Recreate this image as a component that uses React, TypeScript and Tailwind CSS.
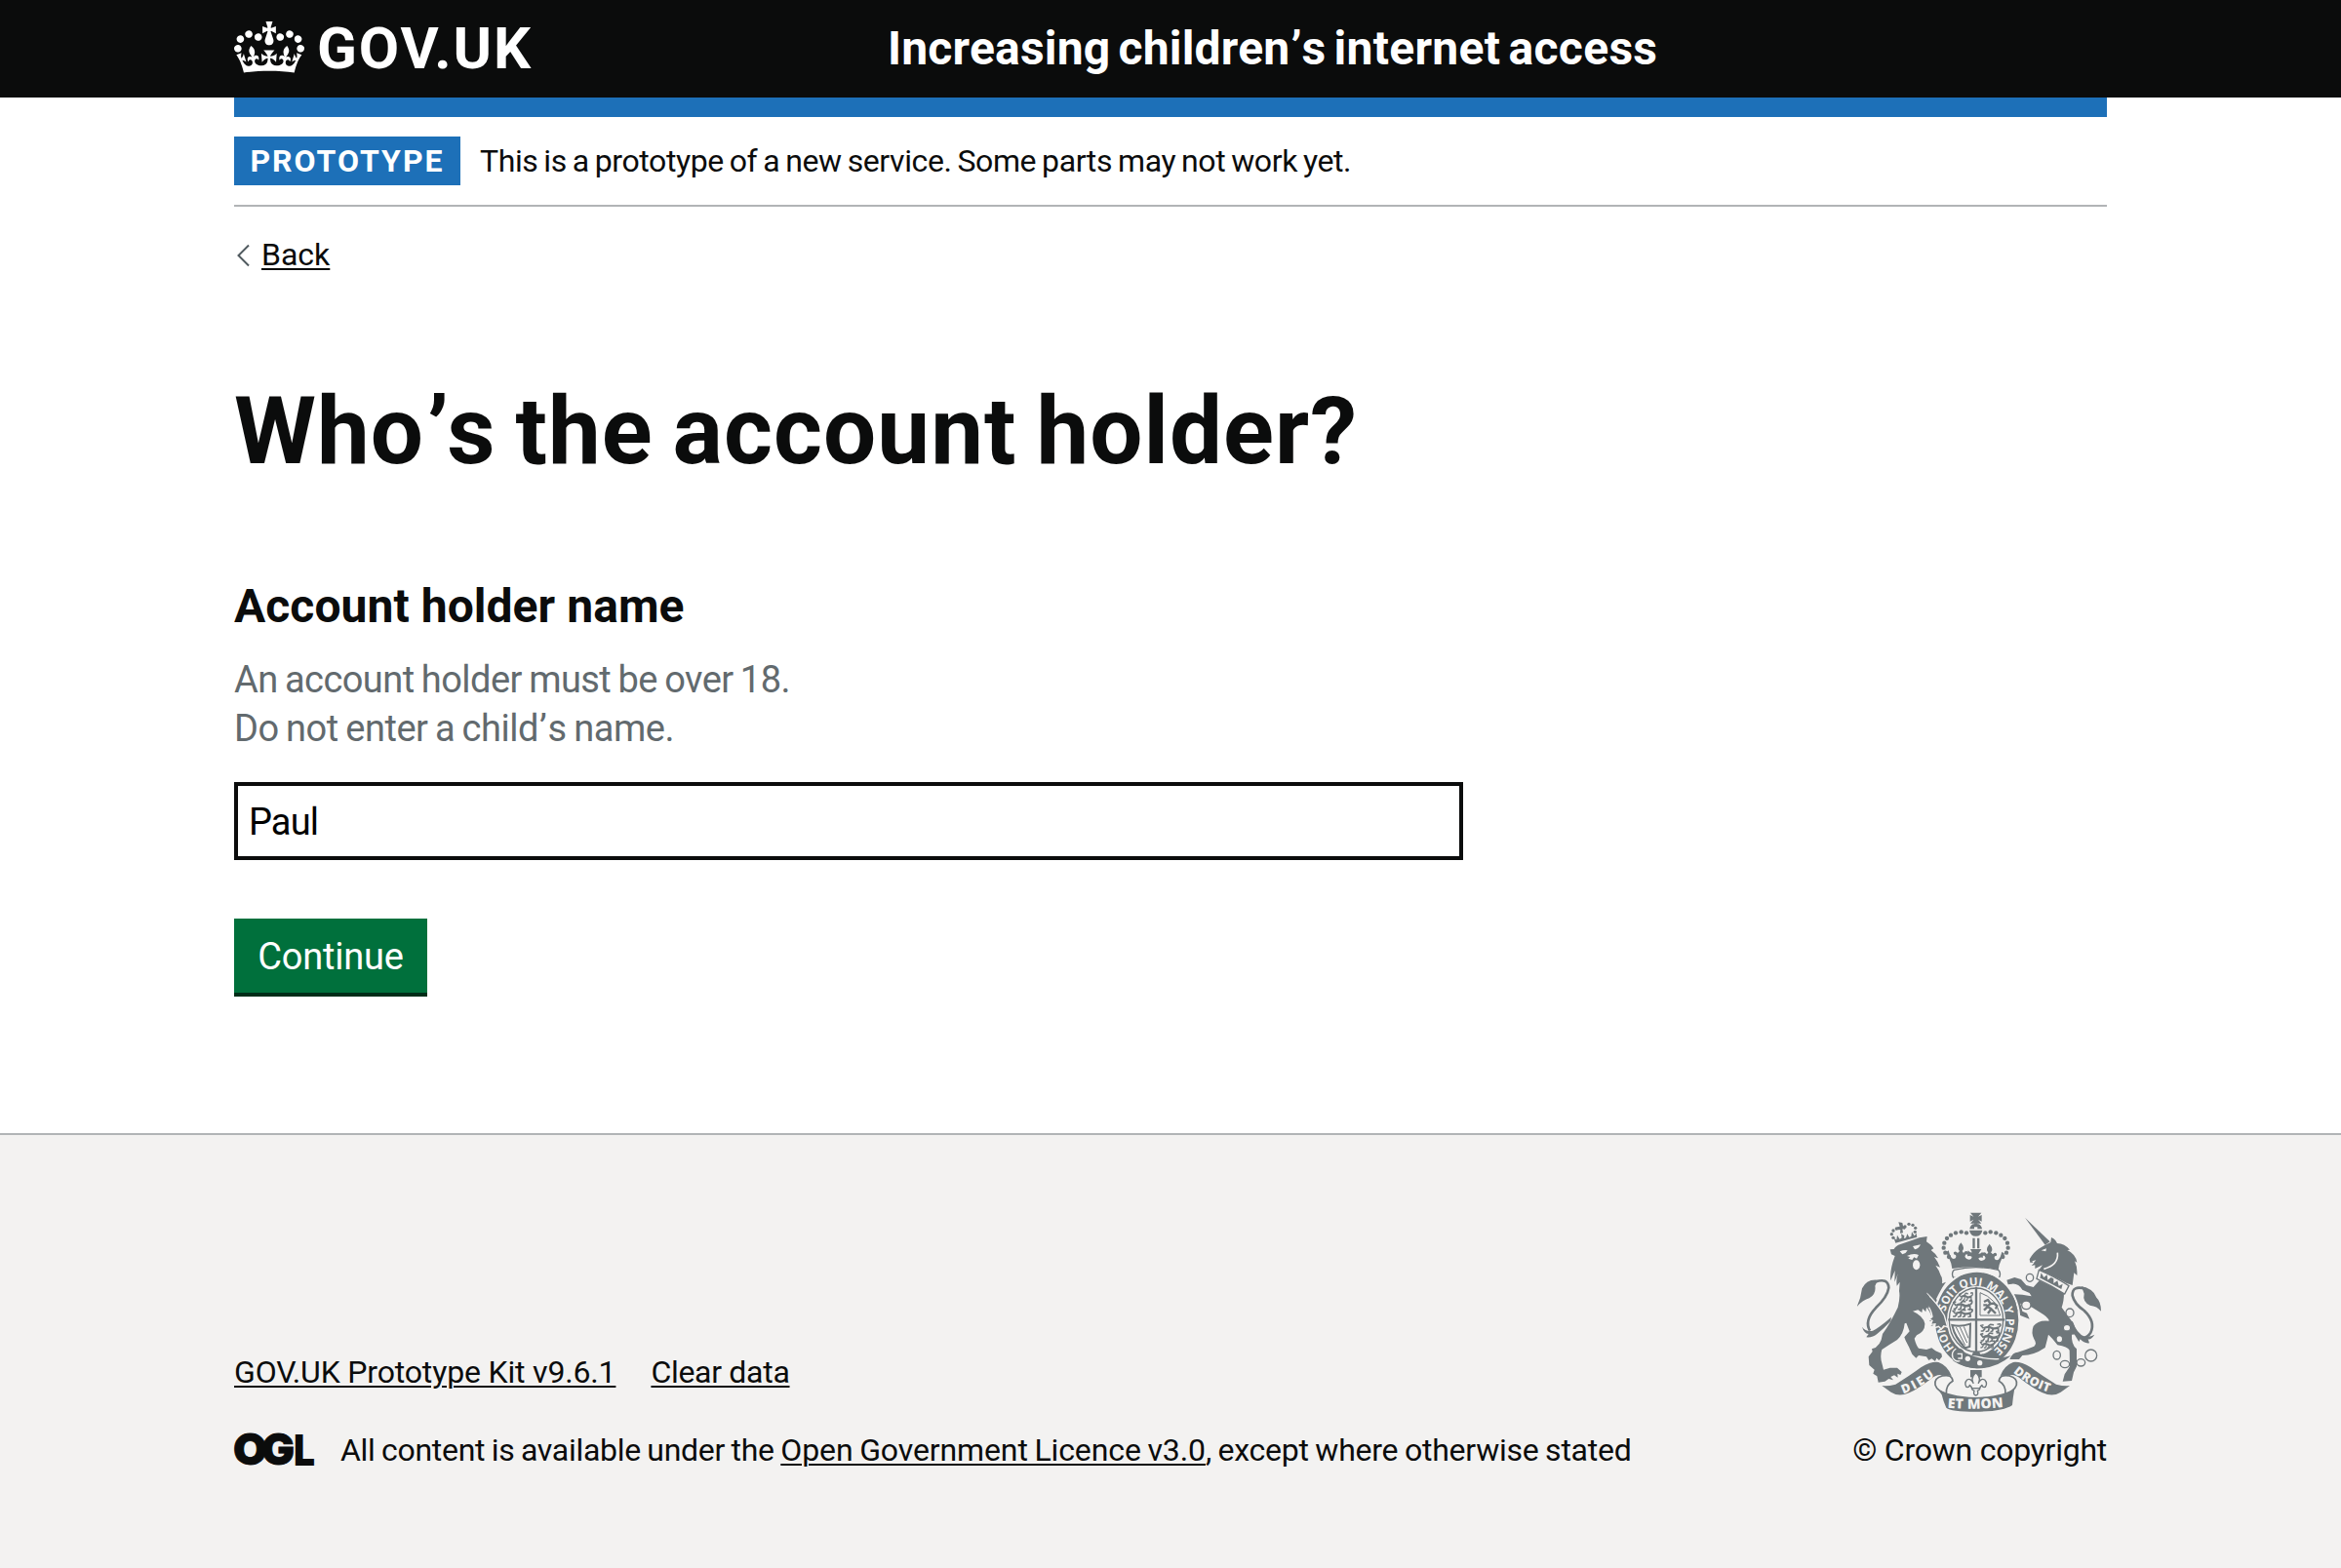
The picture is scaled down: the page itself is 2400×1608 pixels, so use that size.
import type { ReactNode } from "react";

const INK = "#6f777b";
const PAPER = "#f3f2f1";

function CrownLogo() {
  return (
    <svg className="h-[53px] w-[72px] shrink-0" viewBox="0 0 132 97" fill="currentColor" aria-hidden="true">
      <path
        fillRule="evenodd"
        d="M25 30.2c3.5 1.5 7.7-.2 9.1-3.7 1.5-3.6-.2-7.8-3.9-9.2-3.6-1.4-7.6.3-9.1 3.9-1.4 3.5.3 7.5 3.9 9zM9 39.5c3.6 1.5 7.8-.2 9.2-3.7 1.5-3.6-.2-7.8-3.9-9.1-3.6-1.5-7.6.2-9.1 3.8-1.4 3.5.3 7.5 3.8 9zM4.4 57.2c3.5 1.5 7.7-.2 9.1-3.8 1.5-3.6-.2-7.7-3.9-9.1-3.5-1.5-7.6.3-9.1 3.8-1.4 3.5.3 7.6 3.9 9.1zm38.3-21.4c3.5 1.5 7.7-.2 9.1-3.8 1.5-3.6-.2-7.7-3.9-9.1-3.6-1.5-7.6.3-9.1 3.8-1.3 3.6.4 7.7 3.9 9.1zm64.4-5.6c-3.6 1.5-7.8-.2-9.1-3.7-1.5-3.6.2-7.8 3.8-9.2 3.6-1.4 7.7.3 9.2 3.9 1.3 3.5-.4 7.5-3.9 9zm15.9 9.3c-3.6 1.5-7.7-.2-9.1-3.7-1.5-3.6.2-7.8 3.7-9.1 3.6-1.5 7.7.2 9.2 3.8 1.5 3.5-.3 7.5-3.8 9zm4.7 17.7c-3.6 1.5-7.8-.2-9.2-3.8-1.5-3.6.2-7.7 3.9-9.1 3.6-1.5 7.7.3 9.2 3.8 1.3 3.5-.4 7.6-3.9 9.1zM89.3 35.8c-3.6 1.5-7.8-.2-9.2-3.8-1.4-3.6.2-7.7 3.9-9.1 3.6-1.5 7.7.3 9.2 3.8 1.4 3.6-.3 7.7-3.9 9.1zM69.7 17.7l8.9 4.7V9.3l-8.9 2.8c-.2-.3-.5-.6-.9-.9L72.4 0H59.6l3.5 11.2c-.3.3-.6.5-.9.9l-8.8-2.8v13.1l8.8-4.7c.3.3.6.7.9.9l-5 15.4v.1c-.2.8-.4 1.6-.4 2.4 0 4.1 3.1 7.5 7 8.1h.2c.3 0 .7.1 1 .1.4 0 .7 0 1-.1h.2c4-.6 7.1-4.1 7.1-8.1 0-.8-.1-1.7-.4-2.4V34l-5.1-15.4c.4-.2.7-.6 1-.9zM66 92.8c16.9 0 32.8 1.1 47.1 3.2 4-16.9 8.9-26.7 14-33.5l-9.6-3.4c1 4.9 1.1 7.2 0 10.2-1.5-1.4-3-4.3-4.2-8.7L108.6 76c2.8-2 5-3.2 7.5-3.3-4.4 9.4-10 11.9-13.6 11.2-4.3-.8-6.3-4.6-5.6-7.9 1-4.7 5.7-5.9 8-.5 4.3-8.7-3-11.4-7.6-8.8 7.1-7.2 7.9-13.5 2.1-21.1-8 6.1-8.1 12.3-4.5 20.8-4.7-5.4-12.1-2.5-9.5 6.2 3.4-5.2 7.9-2 7.2 3.1-.6 4.3-6.4 7.8-13.5 7.2-10.3-.9-10.9-8-11.2-13.8 2.5-.5 7.1 1.8 11 7.3L80.2 60c-4.1 4.4-8 5.3-12.3 5.4 1.4-4.4 8-11.6 8-11.6H55.5s6.4 7.2 7.9 11.6c-4.2-.1-8-1-12.3-5.4l1.4 16.4c3.9-5.5 8.5-7.7 10.9-7.3-.3 5.8-.9 12.8-11.1 13.8-7.2.6-12.9-2.9-13.5-7.2-.7-5 3.8-8.3 7.1-3.1 2.7-8.7-4.6-11.6-9.4-6.2 3.7-8.5 3.6-14.7-4.6-20.8-5.8 7.6-5 13.9 2.2 21.1-4.7-2.6-11.9.1-7.7 8.8 2.3-5.5 7.1-4.2 8.1.5.7 3.3-1.3 7.1-5.7 7.9-3.5.7-9-1.8-13.5-11.2 2.5.1 4.7 1.3 7.5 3.3l-4.7-15.4c-1.2 4.4-2.7 7.2-4.3 8.7-1.1-3-.9-5.3 0-10.2l-9.5 3.4c5 6.9 9.9 16.7 14 33.5 14.8-2.1 30.8-3.2 47.7-3.2z"
      />
    </svg>
  );
}

function OglLogo() {
  return (
    <svg
      className="h-[33px] w-[82px] shrink-0 overflow-visible font-['Inter'] text-[44px] font-black"
      viewBox="0 0 82 33"
      fill="#0b0c0c"
      aria-label="Open Government Licence"
    >
      <text x="-1" y="31" textLength="35" lengthAdjust="spacingAndGlyphs" stroke="#0b0c0c" strokeWidth="0.8">O</text>
      <text x="28" y="31" textLength="34" lengthAdjust="spacingAndGlyphs" stroke="#0b0c0c" strokeWidth="0.8">G</text>
      <text x="61" y="31.5" textLength="22" lengthAdjust="spacingAndGlyphs">L</text>
    </svg>
  );
}

const CROWN_BEADS: [number, number][] = [
  [408, 134], [392, 131], [375, 134], [360, 141], [348, 151], [340, 165], [338, 180], [343, 195], [354, 208],
];

const LION_CROWN_BEADS: [number, number][] = [
  [138, 104], [133, 93], [138, 82], [148, 76], [160, 75], [174, 70], [186, 62], [198, 65], [206, 74], [205, 86],
];

function RibbonEnd() {
  return (
    <g>
      <path fill={INK} d="M148 604Q166 606 190 600Q236 572 268 548Q300 529 322 532Q350 542 362 574Q344 570 334 574Q322 566 300 582Q262 612 232 626Q200 640 176 624Z" />
      <path fill={PAPER} stroke={INK} strokeWidth="5" d="M334 574Q364 568 366 590Q344 602 346 630Q318 620 312 602Q308 580 334 574Z" />
    </g>
  );
}

function Lions() {
  return (
    <g fill="none" stroke={INK} strokeWidth="5" strokeLinejoin="round">
      <path strokeWidth="8" d="M12 16Q24 8 34 14T56 13" />
      <path d="M12 16L4 6L12 4M16 18L10 26L4 26M28 16L26 26L18 28M40 16L38 26L32 28M54 14L56 26L48 28M56 12Q64 8 60 0L52 2M26 8L32 2L42 4" />
    </g>
  );
}

function RoyalArms() {
  return (
    <svg className="h-[205px] w-[250px]" viewBox="72 70 750 615" aria-hidden="true">
      {/* Imperial crown */}
      <g fill={INK}>
        <path d="M420 72h34l-10 12l11-5v20l-11-6l10 12h-34l10-12l-11 6v-20l11 5z" />
        <path d="M432 104h10v12h-10zM418 122Q420 108 432 106v16zM456 122Q454 108 442 106v16zM417 126h40Q454 144 437 144T417 126z" />
        <path d="M427 150h7v32h-7zM441 150h7v32h-7z" />
        {CROWN_BEADS.map(([x, y]) => (
          <g key={x}>
            <circle cx={x} cy={y} r="6.5" />
            <circle cx={874 - x} cy={y} r="6.5" />
          </g>
        ))}
        <path d="M420 184h34l-9 14q6 2 12-6l2 18q-10-2-14 2q2 12 16 6q10-6 2-14q-10 2-6-8q8-6 14 4l4-6q-10-10 4-26q14 16 4 26l6 6q6-8 12-2q2 8-6 8q-4 10 6 12q10 0 16-26l8 6q-10 16-16 34l-3 16Q437 232 364 244l-3-16q-6-18-16-34l8-6q6 26 16 26q10-2 6-12q-8 0-6-8q6-6 12 2l6-6q-10-10 4-26q14 16 4 26l4 6q6-10 14-4q4 10-6 8q-8 8 2 14q14 6 16-6q-4-4-14-2l2-18q6 8 12 6z" />
      </g>
      <path fill={PAPER} stroke={INK} strokeWidth="4" d="M370 248Q437 232 506 248Q516 258 508 272Q437 252 368 272Q360 258 370 248Z" />

      {/* Lion */}
      <g transform="translate(45 45)" fill={INK}>
        {LION_CROWN_BEADS.map(([x, y]) => (
          <circle key={`${x}-${y}`} cx={x} cy={y} r="5" />
        ))}
        <path d="M154 56l12 2l2 10l8 2l-2 8l-8-1l2 12l-9 1l1-11l-9 1l-1-9l8-2z" />
        <path d="M140 106l8 4l2-14l8 12l6-4l-2-12l10 6l-1 8l6-2l4-12l6 10l6-2l2-14l8 12l6-8l2 12l-66 18z" />
        <path d="M128 140L140 139Q146 128 160 124L218 104L242 100L240 116Q256 126 262 137L254 142Q268 152 276 167L264 163Q276 178 282 195L268 189Q280 205 284 220Q290 226 288 245L300 240Q288 256 278 276L270 292L296 332Q304 350 303 386L291 378L284 389L276 380L266 384L267 372L254 375L258 362L249 360L258 351Q250 328 240 318L238 332L228 322L226 334L214 326L198 330Q230 344 235 368Q236 392 210 404L203 414Q208 434 216 444L240 448L256 443L268 452L286 460L288 470L279 481L271 474L267 484L256 476L247 481L240 470L216 466L208 474L196 462L186 440L176 420L172 410L188 392L178 366L173 368Q170 400 150 418Q124 434 103 448Q96 470 104 494L108 510L128 504L150 504L164 517L160 526L151 522L152 534L141 527L130 532L138 542L124 538L112 546L92 549L88 530L76 522L80 510L64 496L62 470L74 454L72 446Q100 440 105 400Q128 368 152 318Q160 286 156 268L158 240L149 252Q146 232 152 215L142 240L143 205L130 236Q126 205 143 160L132 155Z" />
        <g fill={PAPER}>
          <path d="M158 146Q172 140 182 143Q178 152 166 155ZM198 130L222 125Q216 138 204 140ZM180 160Q200 150 216 157L210 168L202 164L196 172L184 168L190 163Z" />
          <ellipse cx="209" cy="188" rx="11" ry="15" />
        </g>
        <path fill="none" stroke={INK} strokeWidth="8" d="M82 240Q122 226 124 258Q120 286 84 320Q48 358 66 390" />
        <path d="M90 234Q56 230 42 260Q38 292 26 316Q44 296 64 290Q86 278 82 252ZM132 348Q95 380 75 390Q55 395 42 378Q48 398 62 400L55 410Q74 412 88 400Q110 382 130 360Z" />
      </g>

      {/* Unicorn */}
      <g transform="translate(420 45)" fill={INK}>
        <path d="M168 42L245 116L230 126Z" />
        <path d="M230 126L247 118L249 103Q262 108 267 121Q290 122 306 141L298 142Q324 154 328 180L321 176Q330 195 328 220L319 212L314 250L296 244Q258 222 210 204L222 188L199 199L199 188L188 190L197 180L184 180L182 170Q194 148 210 138Z" />
        <path fill="none" stroke={PAPER} strokeWidth="5" d="M268 150Q272 188 226 200" />
        <path fill={PAPER} d="M218 143l16-6l-2 9zM190 176l12-3l-8 9z" />
        <path d="M212 236L288 272Q288 300 281 318Q304 350 316 366L330 400L312 402Q310 432 327 446L327 500L318 518L312 544L284 546L290 524L306 500L305 450Q300 440 268 434Q250 410 240 402Q236 420 230 442Q195 466 160 466L150 478L121 478Q130 456 146 456Q172 448 196 438Q206 430 196 416Q186 396 194 376Q208 356 242 360Q240 348 215 334L190 318L154 306L160 330L174 336L182 354L152 342L134 308L128 278Q150 276 188 284L182 274L160 264Q148 244 128 246L116 248L112 234L136 226L156 232L172 250L194 256Z" />
        <path fill={PAPER} stroke={INK} strokeWidth="4" d="M211 203Q258 222 303 252L290 277Q248 250 204 230Z" />
        <path d="M214 228l4-16l8 14l10-8l2 16l10-8l8 4l0 14l12-8l4 16l12-6l-4 16q-30-16-64-34z" />
        <path fill="none" stroke={INK} strokeWidth="8" d="M356 262Q312 248 314 282Q320 308 350 328Q386 362 370 396Q362 410 346 412" />
        <path d="M342 254Q378 260 388 288Q402 300 402 330Q390 314 368 312Q344 300 350 276ZM314 360Q328 400 352 408Q370 410 382 402Q372 418 362 416L366 428Q350 430 338 416L334 424Q318 400 306 372Z" />
        <g fill={PAPER} stroke={INK} strokeWidth="4">
          <ellipse cx="183" cy="227" rx="11" ry="12" />
          <ellipse cx="172" cy="311" rx="14" ry="13" />
          <ellipse cx="306" cy="335" rx="12" ry="13" />
          <ellipse cx="297" cy="381" rx="11" ry="10" />
          <ellipse cx="274" cy="416" rx="10" ry="11" />
          <ellipse cx="266" cy="465" rx="11" ry="13" />
          <ellipse cx="291" cy="493" rx="14" ry="11" />
          <ellipse cx="340" cy="488" rx="13" ry="11" />
          <circle cx="371" cy="466" r="18" />
        </g>
      </g>

      {/* Garter and shield */}
      <ellipse cx="440" cy="403" rx="131" ry="151" fill="none" stroke={PAPER} strokeWidth="6" />
      <path fill={INK} fillRule="evenodd" d="M440 255A128 148 0 0 1 440 551A128 148 0 0 1 440 255ZM438 297A90 106 0 0 0 438 509A90 106 0 0 0 438 297Z" />
      <path id="garter-path" fill="none" d="M390 503A95 110 0 1 1 480 503" />
      <g className="font-['Open_Sans'] text-[35px] font-bold" fill={PAPER}>
        <text><textPath href="#garter-path" startOffset="24">HON</textPath></text>
        <text><textPath href="#garter-path" startOffset="143">SOIT</textPath></text>
        <text><textPath href="#garter-path" startOffset="229">QUI</textPath></text>
        <text><textPath href="#garter-path" startOffset="307">MAL</textPath></text>
        <text><textPath href="#garter-path" startOffset="393">Y</textPath></text>
        <text><textPath href="#garter-path" startOffset="427">PENSE</textPath></text>
      </g>
      <path fill={INK} stroke={PAPER} strokeWidth="4" d="M288 322Q318 350 340 388L350 424L338 420L331 430L322 422L310 426L312 414L298 416L303 404L294 400L303 392Q300 372 288 356Z" />
      <path fill={INK} d="M276 310L293 328V364L280 362Z" />
      <path fill={INK} d="M372 488Q395 486 404 504Q450 524 500 522L545 512Q500 552 440 551Q400 548 368 528Q356 506 372 488Z" />
      <g fill="none" stroke={PAPER} strokeWidth="4">
        <path d="M376 490Q360 500 366 518Q374 532 388 528M384 486Q402 486 402 500M380 506h14v14h-12" />
        <path d="M404 500Q450 524 508 522" />
      </g>
      <circle cx="412" cy="521" r="8" fill={PAPER} />
      <circle cx="449" cy="534" r="8" fill={PAPER} />
      <path fill={INK} d="M424 512l6-14h16l8 14z" />
      <g fill="none" stroke={INK}>
        <ellipse cx="438" cy="402" rx="83" ry="98" strokeWidth="4" />
        <path strokeWidth="7" d="M438 300V500M352 401H526" />
      </g>
      <g transform="translate(383 318) scale(.72 .85)"><Lions /></g>
      <g transform="translate(364 342)"><Lions /></g>
      <g transform="translate(362 369) scale(1.05 .85)"><Lions /></g>
      <g transform="translate(448 414) scale(1.05 .85)"><Lions /></g>
      <g transform="translate(448 440)"><Lions /></g>
      <g transform="translate(448 466) scale(.75 .8)"><Lions /></g>
      <g fill="none" stroke={INK}>
        <path strokeWidth="3" d="M450 318Q500 335 512 388H450Z" />
        <path strokeWidth="7" strokeLinejoin="round" d="M462 346L474 340L482 352L472 360L484 368L498 382M484 352L496 350M472 362L462 372M484 368L474 382M498 368L502 358L494 352M460 356L472 356" />
        <path strokeWidth="6" d="M364 418Q392 424 420 414L418 484L404 488Q372 456 364 418Z" />
        <path strokeWidth="3" d="M376 424L404 480M388 424L410 472M400 422L414 458M370 440L398 478" />
      </g>

      {/* Motto ribbon and fleur-de-lis */}
      <RibbonEnd />
      <g transform="translate(874 0) scale(-1 1)"><RibbonEnd /></g>
      <path fill={INK} d="M318 612Q350 636 437 640Q524 636 556 612Q551 640 549 664Q520 684 437 684Q360 684 346 672Q336 650 332 632Z" />
      <path id="motto-left" fill="none" d="M212 630Q264 612 318 568" />
      <path id="motto-right" fill="none" d="M550 562Q600 606 668 626" />
      <path id="motto-centre" fill="none" d="M350 672Q437 680 540 668" />
      <g className="font-['Open_Sans'] text-[38px] font-extrabold" fill={PAPER}>
        <text><textPath href="#motto-left" startOffset="2" textLength="112">DIEU</textPath></text>
        <text><textPath href="#motto-right" startOffset="2" textLength="126">DROIT</textPath></text>
        <text className="text-[42px]"><textPath href="#motto-centre" textLength="172">ET MON</textPath></text>
      </g>
      <path fill={INK} d="M420 556h35v22h-35z" />
      <path
        fill={PAPER}
        stroke={INK}
        strokeWidth="4"
        strokeLinejoin="round"
        d="M437 564Q454 578 445 596Q452 580 464 586Q474 596 466 608Q456 610 456 602Q450 606 448 616L442 620Q446 632 437 634Q428 632 432 620L426 616Q424 606 418 602Q418 610 408 608Q400 596 410 586Q422 580 429 596Q420 578 437 564Z"
      />
      <path fill="none" stroke={INK} strokeWidth="4" d="M424 612h26" />
    </svg>
  );
}

function TextLink({ children, className = "" }: { children: ReactNode; className?: string }) {
  return (
    <a href="#" className={`underline decoration-2 underline-offset-[3px] ${className}`}>
      {children}
    </a>
  );
}

export default function App() {
  return (
    <div className="flex min-h-[1608px] flex-col bg-white font-['Roboto',sans-serif] text-[#0b0c0c]">
      <header className="h-[100px] bg-[#0b0c0c] text-white">
        <div className="mx-auto flex h-[100px] w-[1920px] items-center">
          <a href="#" className="flex w-[670px] items-center gap-[13px]">
            <span className="-mt-1">
              <CrownLogo />
            </span>
            <span className="text-[60px] leading-[60px] font-bold tracking-[1.9px]">GOV.UK</span>
          </a>
          <span className="text-5xl leading-[60px] font-bold tracking-[0.2px] [word-spacing:-4px]">
            Increasing children<span className="ml-px tracking-[0px]">’</span>s
            <span className="tracking-[0.3px]"> internet access</span>
          </span>
        </div>
      </header>

      <div className="mx-auto w-[1920px]">
        <div className="h-5 bg-[#1d70b8]" />
        <div className="flex items-center gap-5 border-b-2 border-[#b1b4b6] py-5">
          <strong className="flex h-[50px] w-[232px] items-center justify-center bg-[#1d70b8] text-[32px] leading-none font-bold tracking-[2px] text-white">
            PROTOTYPE
          </strong>
          <span className="text-[32px] leading-10 tracking-[-0.4px] [word-spacing:-1.6px]">
            This is a prototype of a new service. Some parts may not work yet.
          </span>
        </div>

        <div className="mt-[29px] flex h-10 items-center">
          <svg className="mt-0.5 ml-[3px] h-[24px] w-[14px]" viewBox="0 0 14 24" fill="none" stroke="#505a5f" strokeWidth="2">
            <path d="M12 1.5L1.5 12L12 22.5" />
          </svg>
          <TextLink className="ml-[11px] text-[32px] leading-10">Back</TextLink>
        </div>

        <main>
          <h1 className="mt-[111px] text-[96px] leading-[100px] font-bold tracking-[1.05px] whitespace-nowrap [word-spacing:-5px]">
            Who<span className="ml-[3px] tracking-[-2px]">’</span>s the account holder?
          </h1>
          <div className="mt-[100px]">
            <label htmlFor="holder" className="block text-5xl leading-[60px] font-bold tracking-[0.05px]">
              Account holder name
            </label>
            <p className="mt-5 text-[38px] leading-[50px] tracking-[-0.55px] text-[#626a6e] [word-spacing:-1.6px]">
              An account holder must be over 18.
              <br />
              <span className="tracking-[-0.45px]">
                Do not enter a child<span className="ml-px tracking-[1px]">’</span>s name.
              </span>
            </p>
            <input
              id="holder"
              type="text"
              defaultValue="Paul"
              className="mt-[30px] block h-20 w-[1260px] border-4 border-[#0b0c0c] px-[11px] pt-0.5 text-[38px] tracking-[-0.9px] text-black outline-none"
            />
          </div>
          <button className="mt-[60px] flex h-20 w-[198px] items-center justify-center border-b-4 border-[#002d18] bg-[#00703c] pt-0.5 text-[38px] tracking-[-0.2px] text-white">
            Continue
          </button>
        </main>
      </div>

      <footer className="mt-[140px] flex-1 border-t-2 border-[#b1b4b6] bg-[#f3f2f1]">
        <div className="mx-auto flex h-[343px] w-[1920px] items-end justify-between text-[32px] leading-10">
          <div>
            <div className="flex gap-[36px]">
              <TextLink className="tracking-[-0.17px]">GOV.UK Prototype Kit v9.6.1</TextLink>
              <TextLink className="tracking-[-0.3px]">Clear data</TextLink>
            </div>
            <div className="mt-10 flex items-center">
              <OglLogo />
              <span className="ml-[27px] tracking-[-0.3px] [word-spacing:-1.1px]">
                All content is available under the{" "}
                <TextLink className="tracking-[-0.12px]">Open Government Licence v3.0</TextLink>
                <span className="tracking-[-0.24px]">, except where otherwise stated</span>
              </span>
            </div>
          </div>
          <div className="flex flex-col items-end">
            <div className="mr-[6px] mb-[19px]">
              <RoyalArms />
            </div>
            <span className="tracking-[-0.25px]">© Crown copyright</span>
          </div>
        </div>
      </footer>
    </div>
  );
}
